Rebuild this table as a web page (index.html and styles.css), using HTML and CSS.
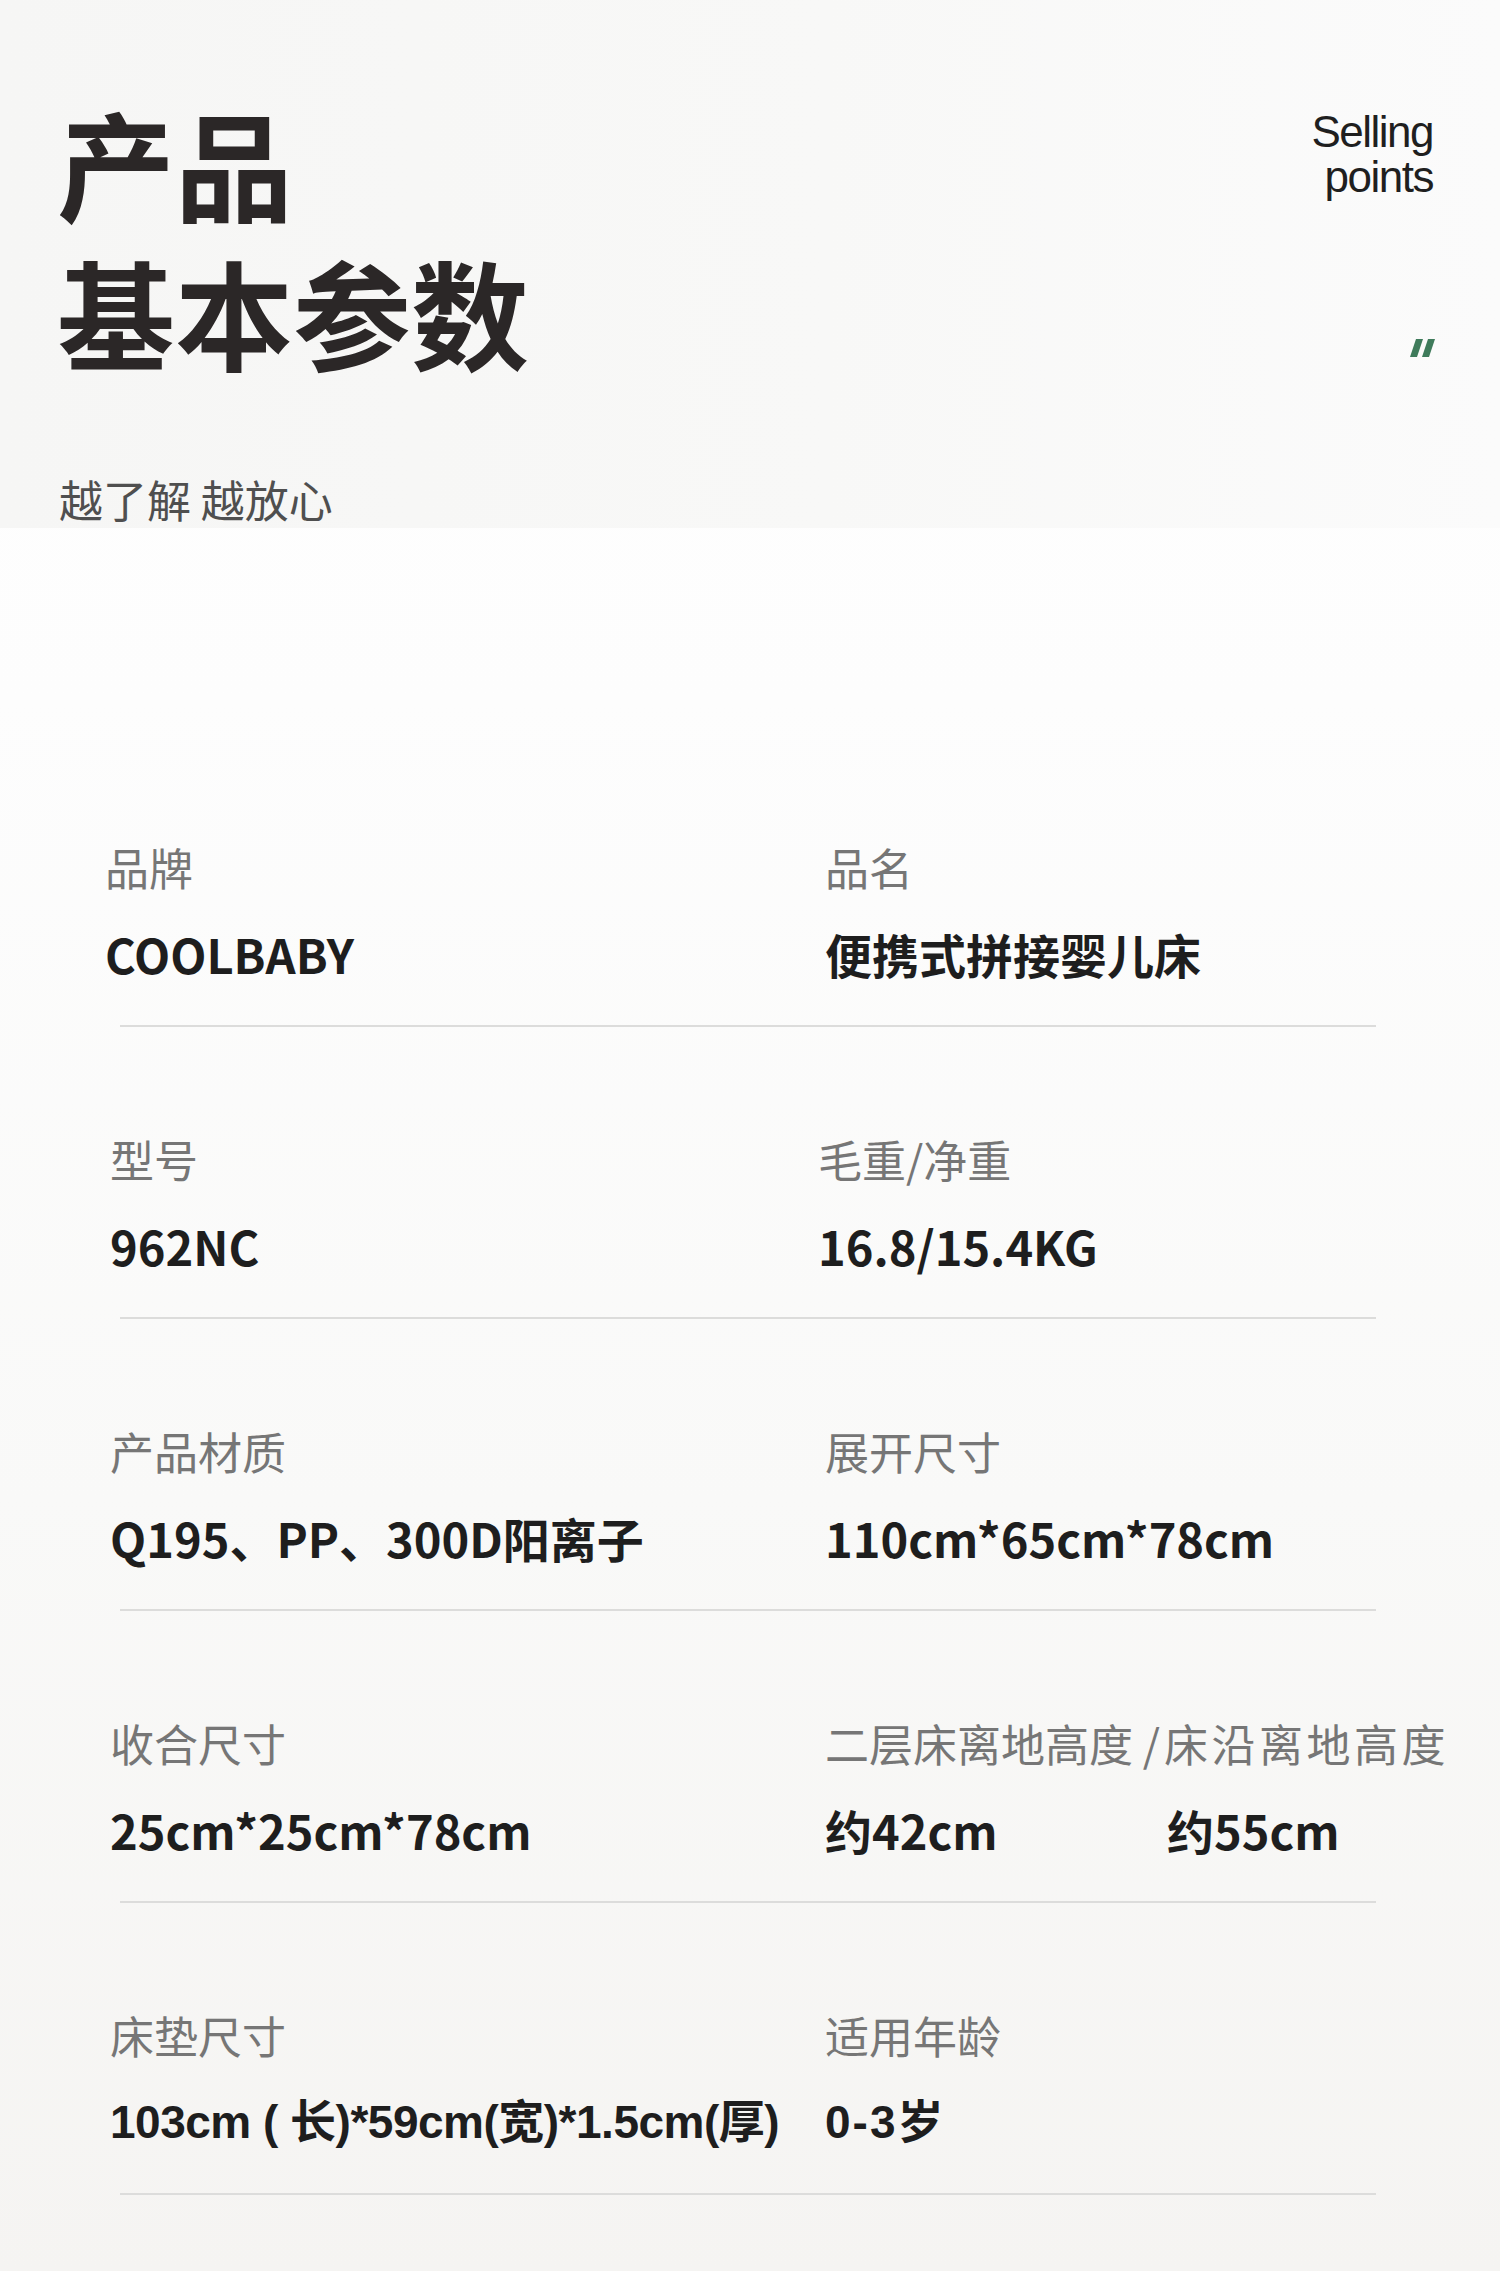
FILE: index.html
```html
<!DOCTYPE html>
<html lang="zh-CN">
<head>
<meta charset="utf-8">
<title>产品基本参数</title>
<link rel="stylesheet" href="styles.css">
</head>
<body>
<div class="page">
  <header class="hero">
    <div class="hero-left">
      <h1 class="title"><span class="title-line">产品</span><span class="title-line">基本参数</span></h1>
      <p class="subtitle">越了解 越放心</p>
    </div>
    <div class="hero-right">
      <p class="en">Selling<br>points</p>
      <svg class="quote" width="26" height="18" viewBox="0 0 26 18" aria-hidden="true">
        <polygon points="7,0 14,0 8,18 1,18" fill="#3f7b5b"/>
        <polygon points="19,0 26,0 20,18 13,18" fill="#3f7b5b"/>
      </svg>
    </div>
  </header>

  <section class="specs">
    <div class="row">
      <div class="cols">
        <div class="cell cell-first"><div class="label">品牌</div><div class="value">COOLBABY</div></div>
        <div class="cell"><div class="label">品名</div><div class="value">便携式拼接婴儿床</div></div>
      </div>
    </div>
    <div class="row">
      <div class="cols">
        <div class="cell"><div class="label">型号</div><div class="value">962NC</div></div>
        <div class="cell cell-shift"><div class="label">毛重/净重</div><div class="value">16.8/15.4KG</div></div>
      </div>
    </div>
    <div class="row">
      <div class="cols">
        <div class="cell"><div class="label">产品材质</div><div class="value">Q195、PP、300D阳离子</div></div>
        <div class="cell"><div class="label">展开尺寸</div><div class="value">110cm*65cm*78cm</div></div>
      </div>
    </div>
    <div class="row">
      <div class="cols">
        <div class="cell"><div class="label">收合尺寸</div><div class="value">25cm*25cm*78cm</div></div>
        <div class="cell"><div class="label">二层床离地高度 /<span class="spread">床沿离地高度</span></div><div class="value value-pair"><span class="pair-a">约42cm</span><span>约55cm</span></div></div>
      </div>
    </div>
    <div class="row">
      <div class="cols">
        <div class="cell"><div class="label">床垫尺寸</div><div class="value value-arial">103cm ( 长)*59cm(宽)*1.5cm(厚)</div></div>
        <div class="cell"><div class="label">适用年龄</div><div class="value value-arial value-age">0-3岁</div></div>
      </div>
    </div>
  </section>
</div>
</body>
</html>
```

FILE: styles.css
```css
html, body {
  margin: 0;
  padding: 0;
}

body {
  width: 1500px;
  font-family: "Noto Sans CJK SC", "Noto Sans", sans-serif;
  background: #f8f8f7;
}

.page {
  width: 1500px;
  min-height: 2271px;
  background: linear-gradient(to bottom, #ffffff 0px, #fdfdfd 700px, #f9f9f8 1500px, #f5f4f2 2271px);
  padding-bottom: 76px;
  box-sizing: border-box;
}

/* ---------- header ---------- */
.hero {
  height: 528px;
  box-sizing: border-box;
  padding: 87px 67px 0 57px;
  display: flex;
  justify-content: space-between;
  align-items: flex-start;
  background: linear-gradient(to right, #f6f6f5 0%, #f8f8f7 55%, #fbfbfb 100%);
}

.title {
  margin: 0;
  font-size: 118px;
  font-weight: 700;
  color: #2b2727;
}

.title-line {
  display: block;
  height: 149px;
  line-height: 149px;
}

.subtitle {
  margin: 85px 0 0 2px;
  font-size: 44px;
  line-height: 58px;
  font-weight: 400;
  color: #4f4f4f;
}

.hero-right {
  display: flex;
  flex-direction: column;
  align-items: flex-end;
  padding-top: 22px;
}

.en {
  margin: 0;
  font-family: "Liberation Sans", Arial, sans-serif;
  font-size: 44px;
  line-height: 45px;
  letter-spacing: -1.5px;
  color: #1f1f1f;
  text-align: right;
}

.quote {
  display: block;
  margin-top: 140px;
  margin-right: -2px;
}

/* ---------- spec table ---------- */
.specs {
  margin-top: 207px;
}

.row {
  padding-top: 102px;
}

.row::after {
  content: "";
  display: block;
  height: 2px;
  width: 1256px;
  margin: 41px 0 0 120px;
  background: #dcdcdb;
}

.cols {
  display: grid;
  grid-template-columns: 715px 1fr;
  padding-left: 110px;
}

.cell-first {
  margin-left: -5px;
}

.cell-shift {
  margin-left: -7px;
}

.label {
  font-size: 44px;
  line-height: 60px;
  color: #767676;
  font-weight: 400;
  white-space: nowrap;
}

.spread {
  letter-spacing: 3.5px;
  margin-left: 4px;
}

.value {
  margin-top: 27px;
  font-size: 47px;
  line-height: 60px;
  font-weight: 700;
  color: #1e1e1e;
  white-space: nowrap;
}

.value-pair {
  display: flex;
}

.pair-a {
  width: 342px;
}

.value-arial {
  font-family: "Liberation Sans", Arial, "Noto Sans CJK SC", sans-serif;
  font-size: 46px;
  letter-spacing: -0.5px;
}

.value-age {
  letter-spacing: 2px;
}
```
